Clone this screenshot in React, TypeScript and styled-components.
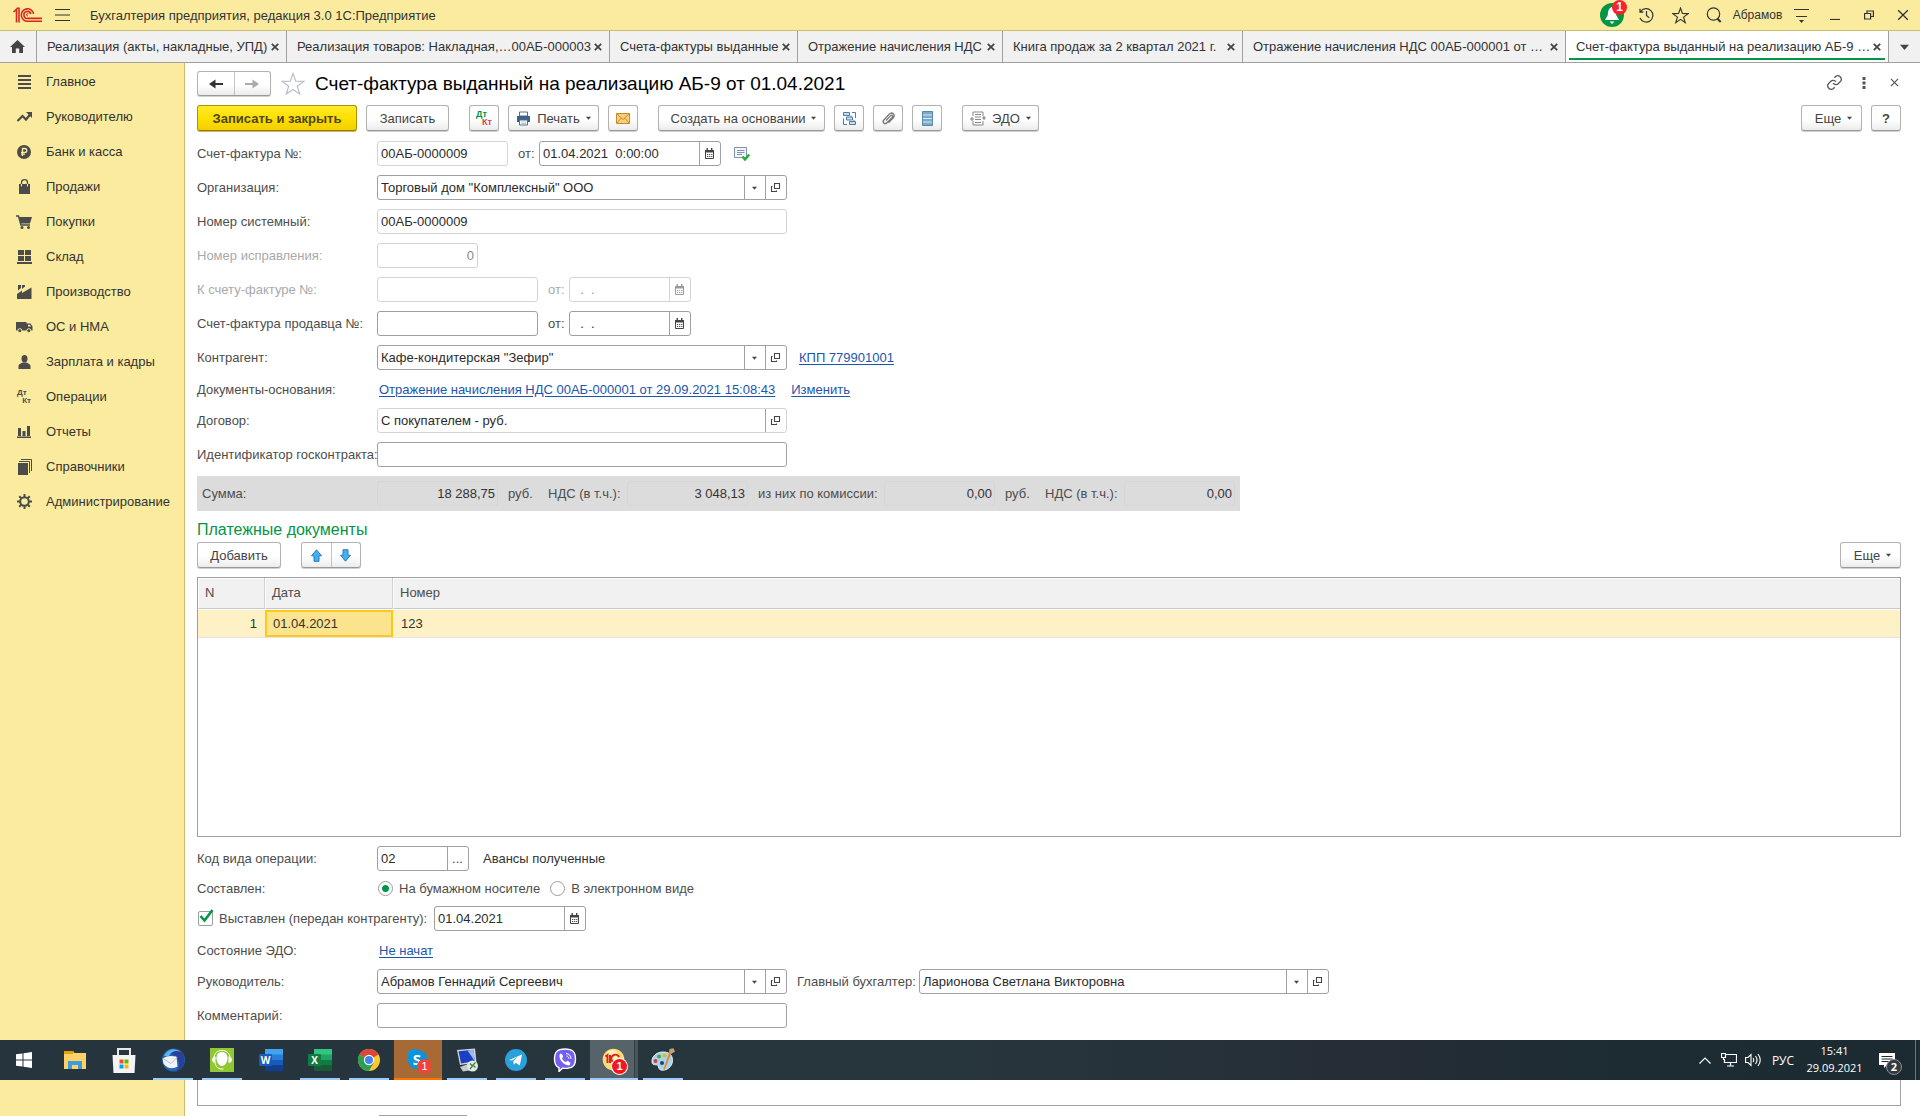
import React from "react";
import styled, { createGlobalStyle, css } from "styled-components";

const GlobalStyle = createGlobalStyle`
  * { box-sizing: border-box; }
  body { margin: 0; background: #fff; }
  body, button, input { font-family: "Liberation Sans", Arial, sans-serif; font-size: 13px; color: #333; }
  button { margin: 0; padding: 0; border: 0; background: none; cursor: pointer; }
  svg { display: block; flex: none; }
`;

const line = "#a0a0a0";
const softLine = "#d4d4d4";
const yellow = "#fbeb9e";
const green = "#009646";

/* ---------- page shell ---------- */

const Page = styled.div`
  min-height: 100vh;
  display: flex;
  flex-direction: column;
`;

const TitleBar = styled.header`
  display: flex;
  align-items: center;
  height: 31px;
  background: ${yellow};
  border-bottom: 1px solid #c9be6c;
`;

const BrandLogo = styled.div`
  width: 55px;
  padding-left: 12px;
`;

const AppName = styled.div`
  flex: 1;
  padding-left: 19px;
  white-space: nowrap;
`;

const BarButton = styled.button`
  position: relative;
  display: flex;
  align-items: center;
  justify-content: center;
  width: 34px;
  height: 30px;
`;

const MenuButton = styled.button`
  width: 16px;
  height: 30px;
  display: flex;
  align-items: center;
`;

const UserName = styled.button`
  width: 53px;
  font-size: 12px;
`;

const BellCount = styled.span`
  position: absolute;
  top: 0;
  right: 2px;
  width: 15px;
  height: 15px;
  border-radius: 50%;
  background: #f8222c;
  color: #fff;
  font-size: 12px;
  font-weight: bold;
  line-height: 15px;
  text-align: center;
`;

/* ---------- tabs ---------- */

const TabBar = styled.nav`
  display: flex;
  height: 32px;
  background: #f1f1f1;
  border-bottom: 1px solid ${line};
`;

const HomeTab = styled.button`
  flex: none;
  display: flex;
  align-items: center;
  justify-content: center;
  width: 37px;
  padding-right: 2px;
  border-right: 1px solid ${line};
`;

const Tab = styled.div<{ $basis: number; $active?: boolean }>`
  position: relative;
  flex: 1 1 ${(p) => p.$basis}px;
  min-width: 0;
  display: flex;
  align-items: center;
  padding: 0 6px 0 10px;
  border-right: 1px solid ${line};
  ${(p) =>
    p.$active &&
    css`
      background: #fff;
      &::after {
        content: "";
        position: absolute;
        left: 3px;
        right: 3px;
        bottom: 2px;
        height: 2px;
        background: ${green};
      }
    `}
`;

const TabTitle = styled.button`
  flex: 1;
  min-width: 0;
  overflow: hidden;
  text-overflow: ellipsis;
  white-space: nowrap;
  text-align: left;
  line-height: 20px;
`;

const TabClose = styled.button`
  display: flex;
  align-items: center;
  justify-content: center;
  width: 10px;
  height: 20px;
`;

const TabList = styled.button`
  flex: none;
  width: 31px;
  display: flex;
  align-items: center;
  justify-content: center;
`;

/* ---------- sidebar ---------- */

const Workspace = styled.div`
  display: flex;
`;

const Sidebar = styled.aside`
  flex: none;
  width: 185px;
  padding-top: 1px;
  background: ${yellow};
  border-right: 1px solid #c9be6c;
`;

const SideItem = styled.button`
  display: flex;
  align-items: center;
  width: 100%;
  height: 35px;
  padding-left: 15px;
  gap: 13px;
  text-align: left;
`;

const SideIcon = styled.span`
  display: flex;
  justify-content: center;
  width: 18px;
`;

const PairIcon = styled.span<{ $tinted?: boolean }>`
  display: flex;
  flex-direction: column;
  width: ${(p) => (p.$tinted ? 16 : 14)}px;
  font-size: ${(p) => (p.$tinted ? 9 : 8)}px;
  font-weight: bold;
  line-height: 8px;
  color: ${(p) => (p.$tinted ? green : "#4b4b4b")};
  text-align: left;
  & > span:last-child {
    text-align: right;
    color: ${(p) => (p.$tinted ? "#e53b34" : "#4b4b4b")};
  }
`;

/* ---------- document ---------- */

const Document = styled.main`
  flex: 1;
  min-width: 0;
  background: #fff;
`;

const DocHeader = styled.div`
  display: flex;
  align-items: center;
  height: 33px;
  padding: 8px 11px 0 12px;
`;

const DocTitle = styled.h1`
  flex: 1;
  margin: 0;
  font-size: 19px;
  font-weight: normal;
  line-height: 24px;
  color: #000;
  white-space: nowrap;
`;

const HeaderIcon = styled.button`
  display: flex;
  align-items: center;
  justify-content: center;
  width: 30px;
  height: 26px;
  padding-bottom: 2px;
`;

const FavButton = styled.button`
  display: flex;
  justify-content: center;
  width: 44px;
`;

const Form = styled.form`
  display: flex;
  flex-direction: column;
  gap: 9px;
  padding: 9px 19px 12px 12px;
`;

const buttonFace = css`
  border: 1px solid #b2b2b2;
  border-bottom-color: #999;
  border-radius: 3px;
  background: linear-gradient(#fff 55%, #ececec);
  box-shadow: 0 1px 0 #d0d0d0;
  color: #444;
`;

const Button = styled.button.attrs({ type: "button" })<{ $width: number; $primary?: boolean }>`
  display: flex;
  align-items: center;
  justify-content: center;
  gap: 6px;
  width: ${(p) => p.$width}px;
  height: 26px;
  white-space: nowrap;
  ${buttonFace}
  ${(p) =>
    p.$primary &&
    css`
      border-color: #ab9400;
      border-bottom-color: #8f7b00;
      background: linear-gradient(#ffea2e, #ffe000 50%, #f2cf00);
      box-shadow: 0 1px 0 #c9b95a;
      font-weight: bold;
      color: #4d4620;
    `}
`;

const SplitButtons = styled.div<{ $half: number; $tall?: boolean }>`
  display: flex;
  height: ${(p) => (p.$tall ? 26 : 25)}px;
  ${buttonFace}
  & > button {
    display: flex;
    align-items: center;
    justify-content: center;
    width: ${(p) => p.$half}px;
  }
  & > button + button {
    border-left: 1px solid #c4c4c4;
    padding-right: 2px;
  }
`;

const Toolbar = styled.div`
  display: flex;
  gap: 20px;
  padding-bottom: 1px;
`;

const TableToolbar = styled(Toolbar)`
  margin-top: -6px;
  padding-bottom: 0;
`;

const ButtonGroup = styled.div<{ $end?: boolean }>`
  display: flex;
  gap: 9px;
  margin-left: ${(p) => (p.$end ? "auto" : 0)};
`;

const MoreButton = styled(Button)`
  padding-left: 4px;
`;

const Row = styled.div<{ $height?: number }>`
  display: flex;
  align-items: center;
  height: ${(p) => p.$height ?? 25}px;
`;

const Label = styled.label<{ $width?: number; $dim?: boolean; $pad?: number }>`
  flex: none;
  width: ${(p) => p.$width ?? 180}px;
  padding-left: ${(p) => p.$pad ?? 0}px;
  color: ${(p) => (p.$dim ? "#a9a9a9" : "#4d4d4d")};
  white-space: nowrap;
`;

const FieldBox = styled.div<{ $width: number; $soft?: boolean; $dim?: boolean }>`
  flex: none;
  display: flex;
  width: ${(p) => p.$width}px;
  height: 25px;
  border: 1px solid ${(p) => (p.$soft || p.$dim ? softLine : line)};
  border-radius: 3px;
  background: #fff;
  & > input {
    flex: 1;
    min-width: 0;
    padding: 0 3px;
    border: 0;
    outline: 0;
    background: none;
    color: ${(p) => (p.$dim ? "#8a8a8a" : "#2b2b2b")};
  }
  & > button {
    display: flex;
    align-items: center;
    justify-content: center;
    width: 21px;
    padding-right: 1px;
    border-left: 1px solid ${(p) => (p.$dim ? softLine : line)};
    color: ${(p) => (p.$dim ? "#9a9a9a" : "#444")};
  }
`;

const NumberInput = styled.input`
  text-align: right;
`;

const Link = styled.a`
  color: #1c55ae;
  text-decoration: underline;
  text-underline-offset: 2px;
  white-space: nowrap;
`;

const Links = styled.div<{ $indent: number }>`
  display: flex;
  gap: 16px;
  padding-left: ${(p) => p.$indent}px;
`;

const IconAfter = styled.button.attrs({ type: "button" })`
  padding-left: 13px;
`;

const Note = styled.span`
  padding-left: 14px;
`;

const Totals = styled.div`
  display: flex;
  align-items: center;
  align-self: flex-start;
  height: 35px;
  padding-right: 5px;
  background: #dcdcdc;
`;

const TotalInput = styled.input.attrs({ readOnly: true })<{ $width: number }>`
  width: ${(p) => p.$width}px;
  height: 25px;
  padding: 0 2px;
  border: 1px solid #d6d6d6;
  border-radius: 3px;
  background: none;
  color: #333;
  text-align: right;
`;

const SectionTitle = styled.h2`
  margin: 0;
  font-size: 16px;
  font-weight: normal;
  line-height: 19px;
  color: ${green};
`;

const TableFrame = styled.div`
  height: 260px;
  border: 1px solid ${line};
`;

const Table = styled.table`
  width: 100%;
  table-layout: fixed;
  border-collapse: separate;
  border-spacing: 0;
  th {
    height: 31px;
    padding: 0 8px 2px 6px;
    border: 1px solid #fff;
    border-right-width: 0;
    border-bottom: 1px solid #c8c8c8;
    background: #f1f1f1;
    font-weight: normal;
    text-align: left;
    color: #4d4d4d;
    box-shadow: -1px 0 0 #d2d2d2;
  }
  th:first-child { box-shadow: none; }
  td {
    height: 29px;
    padding: 0 8px;
    border-top: 1px solid #fff;
    border-bottom: 1px solid #e4e4e4;
    background: #fdf1c5;
    color: #333;
  }
  td:first-child { text-align: right; }
`;

const ActiveCell = styled.td`
  box-shadow: inset 0 0 0 2px #fbc81f;
  background: #fce48e !important;
`;

const Radio = styled.label`
  display: flex;
  align-items: center;
  gap: 6px;
  margin-right: 9px;
  color: #4d4d4d;
  input {
    appearance: none;
    width: 15px;
    height: 15px;
    margin: 0 0 0 1px;
    border: 1px solid #9c9c9c;
    border-radius: 50%;
    background: #fff;
  }
  input:checked {
    background: radial-gradient(circle, ${green} 3px, #fff 4px);
  }
`;

const Check = styled.label`
  display: flex;
  align-items: center;
  gap: 6px;
  width: 237px;
  padding-left: 1px;
  color: #4d4d4d;
  white-space: nowrap;
`;

const CheckMark = styled.span`
  position: relative;
  width: 15px;
  height: 15px;
  input {
    display: block;
    appearance: none;
    width: 15px;
    height: 15px;
    margin: 0;
    border: 1px solid #9c9c9c;
    border-radius: 2px;
  }
  svg {
    position: absolute;
    left: 1px;
    top: -2px;
    pointer-events: none;
  }
`;

/* ---------- taskbar ---------- */

const Taskbar = styled.footer`
  display: flex;
  height: 40px;
  background: linear-gradient(90deg, #26343e 0%, #27363c 50%, #252d36 72%, #1d2c33 84%, #1c2a31 100%);
  font-family: "Open Sans", "Noto Sans", sans-serif;
`;

const TaskApps = styled.div`
  flex: 1;
  display: flex;
  gap: 1px;
`;

const TaskButton = styled.button<{ $run?: boolean; $state?: "alert" | "active" }>`
  position: relative;
  display: flex;
  align-items: center;
  justify-content: center;
  width: 48px;
  height: 40px;
  &:first-child { margin-right: 2px; }
  ${(p) => p.$state === "alert" && css`background: #a86a35;`}
  ${(p) => p.$state === "active" && css`background: linear-gradient(90deg, #566369 44px, #343f45 44px, #343f45 45px, #4a555b 45px);`}
  &::after {
    content: "";
    position: absolute;
    bottom: 0;
    left: ${(p) => (p.$state ? 0 : 4)}px;
    right: ${(p) => (p.$state ? 0 : 4)}px;
    height: ${(p) => (p.$run ? 2 : 0)}px;
    background: ${(p) => (p.$state === "alert" ? "#ff7300" : "#9fc9f8")};
  }
`;

const TaskBadge = styled.span<{ $ring?: boolean }>`
  position: absolute;
  left: ${(p) => (p.$ring ? 22 : 23)}px;
  top: 19px;
  width: 15px;
  height: 15px;
  border-radius: 50%;
  background: ${(p) => (p.$ring ? "#f3161e" : "#f0433a")};
  box-shadow: 0 0 0 ${(p) => (p.$ring ? 1 : 0)}px #fff;
  color: #fff;
  font-size: 11px;
  font-weight: ${(p) => (p.$ring ? "bold" : "normal")};
  line-height: 15px;
  text-align: center;
`;

const Tray = styled.div`
  display: flex;
  align-items: center;
`;

const TrayButton = styled.button`
  display: flex;
  justify-content: center;
  width: 24px;
`;

const TrayLang = styled.button`
  width: 36px;
  font: 12px "Open Sans", "Noto Sans", sans-serif;
  color: #fff;
`;

const TrayClock = styled.button`
  width: 67px;
  padding-bottom: 2px;
  font: 11px/17px "Open Sans", "Noto Sans", sans-serif;
  color: #fff;
  & > span { display: block; }
`;

const Notices = styled.button`
  position: relative;
  width: 48px;
  height: 40px;
  padding-left: 11px;
  border-right: 1px solid #6d777b;
  margin-right: 4px;
`;

const NoticeCount = styled.span`
  position: absolute;
  left: 18px;
  top: 19px;
  width: 16px;
  height: 16px;
  border: 1px solid #8b9193;
  border-radius: 50%;
  background: #333a3d;
  font: bold 11px/14px "Open Sans", sans-serif;
  color: #fff;
`;

/* ---------- area under the taskbar ---------- */

const Below = styled.div`
  flex: 1;
  display: flex;
`;

const BelowContent = styled.div`
  flex: 1;
  padding: 0 19px 0 12px;
`;

const BelowBox = styled.div`
  height: 26px;
  margin-bottom: 9px;
  border: 1px solid ${line};
  border-top: 0;
`;

const BelowField = styled.div`
  width: 88px;
  height: 1px;
  margin-left: 182px;
  background: ${line};
`;

/* ---------- icons ---------- */

const ink = "#4b4b4b";

const Svg = ({ w, h = w, vb, children }: { w: number; h?: number; vb?: string; children: React.ReactNode }) => (
  <svg width={w} height={h} viewBox={vb ?? `0 0 ${w} ${h}`} fill="none" aria-hidden="true">
    {children}
  </svg>
);

const Caret = ({ size = 5 }: { size?: number }) => (
  <Svg w={size} h={size > 5 ? 6 : 4} vb="0 0 6 4">
    <path d="M0 0.5h6L3 4z" fill="#444" />
  </Svg>
);

const Cross = ({ size, width, color = ink }: { size: number; width: number; color?: string }) => (
  <Svg w={size} vb="0 0 10 10">
    <path d="M1 1l8 8M9 1L1 9" stroke={color} strokeWidth={width} />
  </Svg>
);

const OneCLogo = () => (
  <Svg w={30} h={16}>
    <g stroke="#d9261c" strokeWidth="1.6">
      <path d="M1.5 5L4.5 2.3V15.5M4.5 1.2H7V15.5" />
      <path d="M21.6 6.8A6.2 6.2 0 1 0 16 14.2H30" />
      <path d="M18.8 7A3.5 3.5 0 1 0 16 11.4H30" />
      <path d="M16.8 7.3A1.2 1.2 0 1 0 16 8.9" strokeWidth="1" />
    </g>
  </Svg>
);

const Calendar = () => (
  <Svg w={11} h={12}>
    <path d="M1.5 2.5h8v8h-8z" stroke="currentColor" />
    <path d="M1 2h9v2.500H1zM2.500 0h1.400v2H2.500zM7 0h1.400v2H7z" fill="currentColor" />
    <path d="M3 6.500h5.500M3 8.500h5.500" stroke="currentColor" strokeDasharray="1.200 0.900" />
  </Svg>
);

const OpenIcon = () => (
  <Svg w={11}>
    <path d="M4.5 1.5h5v5h-5zM2.500 4.500H1.500v5h5V8.500" stroke="currentColor" strokeWidth="1.1" />
  </Svg>
);

const Arrow = ({ left, color }: { left?: boolean; color: string }) => (
  <Svg w={16} h={12}>
    <g transform={left ? undefined : "matrix(-1 0 0 1 16 0)"}>
      <path d="M15 5H7.500V1.500L1 6l6.500 4.500V7H15z" fill={color} />
    </g>
  </Svg>
);

const StarIcon = ({ size, color, width }: { size: number; color: string; width: number }) => (
  <Svg w={size} vb="0 0 24 24">
    <path d="M12 1.500l2.700 7.700 8.100.2-6.500 4.900 2.400 7.800-6.700-4.700-6.700 4.700 2.400-7.800L1.200 9.400l8.100-.2z" stroke={color} strokeWidth={width} />
  </Svg>
);

const BellIcon = () => (
  <Svg w={24}>
    <circle cx="12" cy="12" r="12" fill={green} />
    <path d="M12 4c3 1 4 3.500 4.200 8l2.800 5H5l2.800-5C8 7.500 9 5 12 4z" fill="#fff" />
    <path d="M9.500 18.500h5L12 21z" fill="#fff" />
  </Svg>
);

const HistoryIcon = () => (
  <Svg w={16}>
    <path d="M2.600 4.600A6.700 6.700 0 1 1 2 11M2 1.800v3.400h3.400M8.500 4v4.500l2.800 2.400" stroke="#333" strokeWidth="1.200" />
  </Svg>
);

const SearchIcon = () => (
  <Svg w={16}>
    <circle cx="7.500" cy="7" r="6.200" stroke="#333" strokeWidth="1.200" />
    <path d="M11.500 11.800l3.200 3.200" stroke="#333" strokeWidth="2" />
  </Svg>
);

const PrinterIcon = () => (
  <Svg w={15}>
    <path d="M3.500 1h8v4h-8z" fill="#fff" stroke="#50708c" />
    <path d="M1 5h13v6H1z" fill="#3d6486" />
    <path d="M3.500 9h8v5h-8z" fill="#fff" stroke="#50708c" />
    <path d="M5 11h5M5 12.500h5" stroke="#9db5c8" strokeWidth=".7" />
  </Svg>
);

const MailIcon = () => (
  <Svg w={14} h={11}>
    <path d="M.5.5h13v10H.5z" fill="#f8cf7c" stroke="#c98a2c" />
    <path d="M.8.8L7 6.500 13.200.8M.8 10.200L5.300 5M13.200 10.200L8.700 5" stroke="#c98a2c" />
  </Svg>
);

const StructureIcon = () => (
  <Svg w={15}>
    <path d="M1.500 1.500h6v3h-6zM4.500 6h6v3h-6zM7.500 10.500h6v3h-6z" fill="#c9dced" stroke="#4d7fa6" />
    <path d="M10 1.500h3.500V7M1.500 7.500v6H5M9 4.500V6M12 9v1.500" stroke="#4d7fa6" />
  </Svg>
);

const ClipIcon = () => (
  <Svg w={15}>
    <path d="M5 9.500l4.500-4.600c1.500-1.500 3 .1 1.700 1.500L6 11.700c-2.300 2.300-5.300-.6-3-3L8.200 3.300c3-3 6.800.4 4 3.500l-4.700 4.900" stroke="#777" strokeWidth="1.300" />
  </Svg>
);

const BookIcon = () => (
  <Svg w={11} h={15}>
    <path d="M.5.5h10v14H.5z" fill="#7ea9c8" stroke="#5588ac" />
    <path d="M1 4h9M1 7.500h9M1 11h9" stroke="#d9e8f2" />
  </Svg>
);

const EdoIcon = () => (
  <Svg w={16} h={15}>
    <path d="M3 5V1h10v4M3 10v4h10v-4" stroke="#888" />
    <path d="M5 3.500h6M5 6h6M5 8.500h6M5 11.500h6" stroke="#888" />
    <path d="M0 8h4M2 6v4M12 7h4M14 5v4" stroke="#888" strokeWidth="1.200" />
  </Svg>
);

const PostedIcon = () => (
  <Svg w={16} h={15}>
    <path d="M.5 1.500h12v10H.5z" fill="#f4f7fa" stroke="#7f93ac" />
    <path d="M3 4.500h7.500M3 6.500h7.500M3 8.500h5" stroke="#7f93ac" />
    <path d="M8.500 10.500l2.500 3 4.200-5" stroke="#22b13a" strokeWidth="2.400" />
  </Svg>
);

const BlueArrow = ({ down }: { down?: boolean }) => (
  <Svg w={13}>
    <g transform={down ? "rotate(180 6.5 6.5)" : undefined}>
      <path d="M6.500.8l5 6H9v5.500H4V6.800H1.500z" fill="#44aef0" stroke="#2380bd" />
    </g>
  </Svg>
);

const LinkIcon = () => (
  <Svg w={17} vb="0 0 24 24">
    <path d="M10 13a5 5 0 0 0 7.500.5l3-3a5 5 0 0 0-7-7l-1.700 1.700M14 11a5 5 0 0 0-7.500-.5l-3 3a5 5 0 0 0 7 7l1.700-1.700" stroke="#555" strokeWidth="1.800" />
  </Svg>
);

const sideIcons: Record<string, React.ReactNode> = {
  main: (
    <Svg w={13} h={14}>
      <path d="M0 1h13M0 5h13M0 9h13M0 13h13" stroke={ink} strokeWidth="2" />
    </Svg>
  ),
  chart: (
    <Svg w={17} h={12}>
      <path d="M1.500 10l5-5 3.500 3.500L14.500 3" stroke={ink} strokeWidth="2.200" />
      <path d="M10 1h6v6z" fill={ink} />
    </Svg>
  ),
  ruble: (
    <Svg w={14}>
      <circle cx="7" cy="7" r="7" fill={ink} />
      <path d="M5.500 11V3.500h2.300a1.900 1.900 0 0 1 0 3.900H4M4 9.200h4" stroke={yellow} strokeWidth="1.300" />
    </Svg>
  ),
  bag: (
    <Svg w={13} h={15}>
      <path d="M1 5h11v10H1z" fill={ink} />
      <path d="M3.500 7V3.500a3 2.800 0 0 1 6 0V7" stroke={ink} strokeWidth="1.300" />
      <path d="M3.500 5v2.500M9.500 5v2.500" stroke={yellow} />
    </Svg>
  ),
  cart: (
    <Svg w={16} h={14}>
      <path d="M0 1h2.500L5 10h9" stroke={ink} strokeWidth="1.500" />
      <path d="M3 2h13l-2 6.500H5z" fill={ink} />
      <circle cx="6" cy="12.500" r="1.500" fill={ink} />
      <circle cx="12.500" cy="12.500" r="1.500" fill={ink} />
    </Svg>
  ),
  stock: (
    <Svg w={15} h={14}>
      <path d="M1 0h6v5H1zM8 0h6v5H8zM1 6h6v5H1zM8 6h6v5H8zM0 12h15v2H0z" fill={ink} />
    </Svg>
  ),
  factory: (
    <Svg w={15} h={14}>
      <path d="M0 14V9l5-3.500V8l9.500-5.500V14zM1 0h3v3L1 5.500zM5 0h3v1.500L5 4z" fill={ink} />
    </Svg>
  ),
  truck: (
    <Svg w={17} h={12}>
      <path d="M0 1h10.500v8.500H0zM10.500 2.500h4L16.500 5.500v4h-6z" fill={ink} />
      <path d="M12 3.700h2l1 1.800h-3z" fill={yellow} />
      <circle cx="3.800" cy="9.700" r="2" fill={ink} stroke={yellow} />
      <circle cx="12.800" cy="9.700" r="2" fill={ink} stroke={yellow} />
    </Svg>
  ),
  person: (
    <Svg w={13} h={14}>
      <ellipse cx="6.500" cy="3.700" rx="3" ry="3.700" fill={ink} />
      <path d="M.5 14v-3c0-2 3-2.700 4-3.500h4c1 .8 4 1.500 4 3.500v3z" fill={ink} />
    </Svg>
  ),
  ops: (
    <PairIcon>
      <span>Дт</span>
      <span>Кт</span>
    </PairIcon>
  ),
  bars: (
    <Svg w={14} h={12}>
      <path d="M1 2h3v8H1zM5.500 5h3v5h-3zM10 0h3v10h-3zM0 10.500h14V12H0z" fill={ink} />
    </Svg>
  ),
  books: (
    <Svg w={15} h={16}>
      <path d="M1 4h10v12H1z" fill={ink} />
      <path d="M2 2.500h10.500V14M4 .5h10.500V12" stroke={ink} />
    </Svg>
  ),
  gear: (
    <Svg w={15}>
      <circle cx="7.500" cy="7.500" r="4.300" stroke={ink} strokeWidth="2" />
      <path d="M7.500 0v3M7.500 12v3M0 7.500h3M12 7.500h3M2.200 2.200l2.100 2.100M10.700 10.700l2.100 2.100M2.200 12.800l2.100-2.100M10.700 4.300l2.100-2.100" stroke={ink} strokeWidth="2" />
    </Svg>
  ),
};

/* taskbar drawings */

const OfficeIcon = ({ letter, tones }: { letter: string; tones: string[] }) => (
  <Svg w={24} h={22}>
    <path d="M6 0h18v6H6z" fill={tones[0]} />
    <path d="M6 5.500h18V11H6z" fill={tones[1]} />
    <path d="M6 11h18v5.500H6z" fill={tones[2]} />
    <path d="M6 16.500h18V22H6z" fill={tones[3]} />
    <rect y="5" width="13" height="12" rx="1" fill={tones[4]} />
    <text x="6.500" y="14.800" textAnchor="middle" fontFamily="Open Sans" fontWeight="bold" fontSize="10" fill="#fff">
      {letter}
    </text>
  </Svg>
);

const taskIcons: Record<string, React.ReactNode> = {
  win: (
    <Svg w={16}>
      <path d="M0 2.300l6.500-.9v6.100H0zM7.500 1.200L16 0v7.500H7.500zM0 8.500h6.500v6.100L0 13.700zM7.500 8.500H16V16l-8.500-1.200z" fill="#fff" />
    </Svg>
  ),
  files: (
    <Svg w={22} h={18}>
      <path d="M0 0h9l1.500 2H22v16H0z" fill="#fdd367" />
      <path d="M0 0h9l1 1.500L8.500 3H0z" fill="#e8a208" />
      <path d="M4 18v-8h14v8h-4v-4H8v4z" fill="#3d9be0" />
    </Svg>
  ),
  store: (
    <Svg w={24} h={25}>
      <path d="M6 8V1h12v7" stroke="#e8e8e8" strokeWidth="2" />
      <path d="M.5 7h23l-1 18h-21z" fill="#f4f4f4" />
      <path d="M7.500 11.500h4v4h-4z" fill="#f25022" />
      <path d="M12.500 11.500h4v4h-4z" fill="#6bb700" />
      <path d="M7.500 16.500h4v4h-4z" fill="#00a4ef" />
      <path d="M12.500 16.500h4v4h-4z" fill="#ffb900" />
    </Svg>
  ),
  mail: (
    <Svg w={24}>
      <circle cx="12.500" cy="12" r="11.500" fill="#1f66b5" />
      <path d="M14 1c6 1 10 6 9.500 12s-5 10-9 10.500c5-4 6-12-4-18z" fill="#2c3f96" />
      <path d="M3 8C6 1 14-1 20 4c-5-2-10-1-12 4z" fill="#5fb4ec" />
      <path d="M1.500 10.500c4-3 9-3 14-2l1 10c-5 3-11 2-14-3z" fill="#f2f3f5" />
      <path d="M2 10.500l8 5 6-6" stroke="#b9bfc6" />
    </Svg>
  ),
  headset: (
    <Svg w={24}>
      <path d="M0 0h24v24H0z" fill="#8fc832" />
      <path d="M4 9.500C4.500 0 19.500 0 20 9.500" stroke="#fff" />
      <path d="M12 4c3.500 0 5.500 2.300 5.500 6S15 18 12 18s-5.500-4.300-5.500-8S8.500 4 12 4z" fill="#fff" />
      <path d="M5.500 8.500C1 8.500 1 15 5.500 15zM18.500 8.500c4.500 0 4.500 6.500 0 6.500z" fill="#fff" />
      <path d="M5 15c1 4 3 5.500 6 6h2.500" stroke="#fff" />
    </Svg>
  ),
  word: <OfficeIcon letter="W" tones={["#41a5ee", "#2b7cd3", "#185abd", "#103f91", "#185abd"]} />,
  excel: <OfficeIcon letter="X" tones={["#33c481", "#21a366", "#107c41", "#185c37", "#107c41"]} />,
  chrome: (
    <Svg w={22} vb="0 0 24 24">
      <circle cx="12" cy="12" r="12" fill="#fcc934" />
      <path d="M12 12L1.600 6A12 12 0 0 1 22.400 6z" fill="#d9473a" />
      <path d="M12 12L1.600 6A12 12 0 0 0 12 24l5.200-9z" fill="#2f9e52" />
      <circle cx="12" cy="12" r="5.600" fill="#fff" />
      <circle cx="12" cy="12" r="4.400" fill="#4285f4" />
    </Svg>
  ),
  skype: (
    <Svg w={24}>
      <circle cx="8" cy="8" r="7" fill="#0f9ae0" />
      <circle cx="15" cy="15" r="7" fill="#0078d4" />
      <circle cx="11.500" cy="11.500" r="9.800" fill="#0a94dd" />
      <text x="11" y="17" textAnchor="middle" fontFamily="Open Sans" fontWeight="bold" fontSize="15" fill="#fff">S</text>
    </Svg>
  ),
  remote: (
    <Svg w={24}>
      <path d="M2 2l18-1.500 1.500 14L5 17z" fill="#d8d8d8" />
      <path d="M3.500 3.300l15-1.500 1.300 11.500L6 15.500z" fill="#1b3fc4" />
      <path d="M12.500 2.500l6-.7 1.300 11.500z" fill="#9db8f2" />
      <path d="M5 19l8-3 4 6-9 1.500z" fill="#c9c9c9" />
      <circle cx="17.500" cy="18" r="5.500" fill="#e4e8e4" />
      <path d="M15 15.500l2.500 2.500-2.500 3M20.500 14.500L18 17l2.500 2.500" stroke="#3a8b45" strokeWidth="1.400" />
    </Svg>
  ),
  telegram: (
    <Svg w={22}>
      <circle cx="11" cy="11" r="11" fill="#2aa1da" />
      <path d="M4 11l13-5.500-2.200 11-4-2.800-2 2-.5-3.600 5-4.600-6.500 4z" fill="#fff" />
    </Svg>
  ),
  viber: (
    <Svg w={24}>
      <path d="M12 1C4 1 1.500 4 1.500 11c0 5 1.500 7.500 4.500 8.700V23.500l3.500-3.200c10 .5 13-2.300 13-9.300S20 1 12 1z" fill="#7360f2" stroke="#fff" strokeWidth="1.400" />
      <path d="M7.500 5.500c-3 2 .5 11 8 12 2-.5 2.500-2.500 1-3.500l-2-1.200-1.400 1.200c-2-.5-3.500-2-4-4L10.200 8.500 9 6z" fill="#fff" />
      <path d="M13 5.500c3 .3 5 2.300 5 5.500M13.500 8c1.500.2 2.300 1.200 2.400 2.700" stroke="#fff" />
    </Svg>
  ),
  onec: (
    <Svg w={24}>
      <circle cx="11.500" cy="11.500" r="10.800" fill="#fbdc78" />
      <circle cx="10" cy="8" r="6" fill="#fff3b5" />
      <path d="M3.500 8.500L5.500 7V15M8 7v8" stroke="#d9261c" strokeWidth="2" />
      <path d="M17 9a4 4 0 1 0-2.500 5.500H20" stroke="#d9261c" strokeWidth="2" />
    </Svg>
  ),
  paint: (
    <Svg w={24}>
      <path d="M12 4C6 4 .5 8 1 14c.3 3.500 3 2.500 5 2.800 2 .5.500 4 4 5.200 5 1.200 11.500-3 11.500-9.500S17 4 12 4z" fill="#a9d3ec" stroke="#e6f2f9" />
      <circle cx="4.500" cy="13" r="2" fill="#dd3a36" />
      <circle cx="8" cy="8.500" r="2" fill="#44ad3a" />
      <circle cx="13.500" cy="7.500" r="2" fill="#e8b923" />
      <circle cx="11" cy="15" r="2" fill="#24435e" />
      <path d="M21.500 2.500L14 21l-1.500 2 .2-2.800L19 2z" fill="#e08b2c" />
      <path d="M18.500 1l4-.8L24 3.500l-3.500 2.200-2.300-1.200z" fill="#c6a077" />
    </Svg>
  ),
};

/* ---------- field building blocks ---------- */

type FieldProps = {
  id: string;
  width?: number;
  value?: string;
  soft?: boolean;
  dim?: boolean;
  numeric?: boolean;
  tools?: Array<"list" | "open" | "date" | "pick">;
};

const toolFace = {
  list: ["Выбрать из списка", <Caret key="c" />],
  open: ["Открыть", <OpenIcon key="o" />],
  date: ["Календарь", <Calendar key="d" />],
  pick: ["Выбрать", "..."],
} as const;

const Field = ({ id, width = 410, value = "", soft, dim, numeric, tools = [] }: FieldProps) => {
  const Input = numeric ? NumberInput : "input";
  return (
    <FieldBox $width={width} $soft={soft} $dim={dim}>
      <Input id={id} type="text" defaultValue={value} readOnly={soft} disabled={dim} />
      {tools.map((t) => (
        <button key={t} type="button" aria-label={toolFace[t][0]} disabled={dim}>
          {toolFace[t][1]}
        </button>
      ))}
    </FieldBox>
  );
};

/* ---------- data ---------- */

const tabs = [
  { title: "Реализация (акты, накладные, УПД)", basis: 250 },
  { title: "Реализация товаров: Накладная,…00АБ-000003", basis: 323 },
  { title: "Счета-фактуры выданные", basis: 188 },
  { title: "Отражение начисления НДС", basis: 205 },
  { title: "Книга продаж за 2 квартал 2021 г.", basis: 240 },
  { title: "Отражение начисления НДС 00АБ-000001 от …", basis: 323 },
  { title: "Счет-фактура выданный на реализацию АБ-9 …", basis: 323, active: true },
];

const sections: Array<[string, string]> = [
  ["main", "Главное"],
  ["chart", "Руководителю"],
  ["ruble", "Банк и касса"],
  ["bag", "Продажи"],
  ["cart", "Покупки"],
  ["stock", "Склад"],
  ["factory", "Производство"],
  ["truck", "ОС и НМА"],
  ["person", "Зарплата и кадры"],
  ["ops", "Операции"],
  ["bars", "Отчеты"],
  ["books", "Справочники"],
  ["gear", "Администрирование"],
];

const apps: Array<{ icon: string; name: string; run?: boolean; state?: "alert" | "active"; count?: string }> = [
  { icon: "win", name: "Пуск" },
  { icon: "files", name: "Проводник" },
  { icon: "store", name: "Магазин" },
  { icon: "mail", name: "Почта", run: true },
  { icon: "headset", name: "Поддержка", run: true },
  { icon: "word", name: "Word" },
  { icon: "excel", name: "Excel", run: true },
  { icon: "chrome", name: "Chrome", run: true },
  { icon: "skype", name: "Skype", run: true, state: "alert", count: "1" },
  { icon: "remote", name: "Удаленный рабочий стол", run: true },
  { icon: "telegram", name: "Telegram", run: true },
  { icon: "viber", name: "Viber", run: true },
  { icon: "onec", name: "1С:Предприятие", run: true, state: "active", count: "1" },
  { icon: "paint", name: "Paint", run: true },
];

/* ---------- screen ---------- */

export default function App() {
  return (
    <Page>
      <GlobalStyle />
      <TitleBar>
        <BrandLogo>
          <OneCLogo />
        </BrandLogo>
        <MenuButton aria-label="Меню">
          <Svg w={15} h={12}>
            <path d="M0 .5h15M0 6h15M0 11.500h15" stroke="#333" strokeWidth="1.200" />
          </Svg>
        </MenuButton>
        <AppName>Бухгалтерия предприятия, редакция 3.0 1С:Предприятие</AppName>
        <BarButton aria-label="Уведомления">
          <BellIcon />
          <BellCount>1</BellCount>
        </BarButton>
        <BarButton aria-label="История">
          <HistoryIcon />
        </BarButton>
        <BarButton aria-label="Избранное">
          <StarIcon size={17} color="#333" width={1.6} />
        </BarButton>
        <BarButton aria-label="Поиск">
          <SearchIcon />
        </BarButton>
        <UserName>Абрамов</UserName>
        <BarButton aria-label="Настройки">
          <Svg w={15} h={15}>
            <path d="M0 1.500h15M2 8.500h11" stroke="#333" strokeWidth="1.200" />
            <path d="M5 12h5l-2.500 3z" fill="#333" />
          </Svg>
        </BarButton>
        <BarButton aria-label="Свернуть">
          <Svg w={10} h={10}>
            <path d="M0 9.500h10" stroke="#333" strokeWidth="1.200" />
          </Svg>
        </BarButton>
        <BarButton aria-label="Восстановить">
          <Svg w={10} h={10}>
            <path d="M.6 3.500h6v5.500h-6zM3 3.500V1h6.400v5.500H6.600" stroke="#333" strokeWidth="1.200" />
          </Svg>
        </BarButton>
        <BarButton aria-label="Закрыть">
          <Cross size={12} width={1.1} color="#333" />
        </BarButton>
      </TitleBar>

      <TabBar>
        <HomeTab aria-label="Начальная страница">
          <Svg w={15} h={13}>
            <path d="M7.500 0L15 7h-2v6H9.200V8.500H5.800V13H2V7H0z" fill="#444" />
          </Svg>
        </HomeTab>
        {tabs.map((t) => (
          <Tab key={t.title} $basis={t.basis} $active={t.active}>
            <TabTitle>{t.title}</TabTitle>
            <TabClose aria-label="Закрыть вкладку">
              <Cross size={8} width={2.2} color="#444" />
            </TabClose>
          </Tab>
        ))}
        <TabList aria-label="Все вкладки">
          <Caret size={9} />
        </TabList>
      </TabBar>

      <Workspace>
        <Sidebar>
          {sections.map(([icon, text]) => (
            <SideItem key={icon}>
              <SideIcon>{sideIcons[icon]}</SideIcon>
              {text}
            </SideItem>
          ))}
        </Sidebar>

        <Document>
          <DocHeader>
            <SplitButtons $half={36}>
              <button aria-label="Назад">
                <Arrow left color="#333" />
              </button>
              <button aria-label="Вперед">
                <Arrow color="#aaa" />
              </button>
            </SplitButtons>
            <FavButton aria-label="В избранное">
              <StarIcon size={24} color="#b9bfc6" width={1.2} />
            </FavButton>
            <DocTitle>Счет-фактура выданный на реализацию АБ-9 от 01.04.2021</DocTitle>
            <HeaderIcon aria-label="Ссылка">
              <LinkIcon />
            </HeaderIcon>
            <HeaderIcon aria-label="Дополнительно">
              <Svg w={4} h={12}>
                <path d="M.5 0h3v3h-3zM.5 4.500h3v3h-3zM.5 9h3v3h-3z" fill="#555" />
              </Svg>
            </HeaderIcon>
            <HeaderIcon aria-label="Закрыть">
              <Cross size={9} width={1.3} color="#555" />
            </HeaderIcon>
          </DocHeader>

          <Form>
            <Toolbar>
              <ButtonGroup>
                <Button $width={160} $primary>Записать и закрыть</Button>
                <Button $width={83}>Записать</Button>
              </ButtonGroup>
              <ButtonGroup>
                <Button $width={30}>
                  <PairIcon $tinted>
                    <span>Дт</span>
                    <span>Кт</span>
                  </PairIcon>
                </Button>
                <Button $width={91}>
                  <PrinterIcon />
                  Печать
                  <Caret />
                </Button>
                <Button $width={30} aria-label="Отправить по почте">
                  <MailIcon />
                </Button>
              </ButtonGroup>
              <ButtonGroup>
                <MoreButton $width={167}>
                  Создать на основании
                  <Caret />
                </MoreButton>
                <Button $width={30} aria-label="Структура подчиненности">
                  <StructureIcon />
                </Button>
                <Button $width={30} aria-label="Присоединенные файлы">
                  <ClipIcon />
                </Button>
                <Button $width={30} aria-label="Журнал">
                  <BookIcon />
                </Button>
              </ButtonGroup>
              <ButtonGroup>
                <Button $width={77}>
                  <EdoIcon />
                  ЭДО
                  <Caret />
                </Button>
              </ButtonGroup>
              <ButtonGroup $end>
                <MoreButton $width={61}>
                  Еще
                  <Caret />
                </MoreButton>
                <Button $width={30}>
                  <b>?</b>
                </Button>
              </ButtonGroup>
            </Toolbar>

            <Row>
              <Label htmlFor="number">Счет-фактура №:</Label>
              <Field id="number" width={131} value="00АБ-0000009" soft />
              <Label htmlFor="date" $width={31} $pad={10}>от:</Label>
              <Field id="date" width={182} value="01.04.2021  0:00:00" tools={["date"]} />
              <IconAfter aria-label="Проведен">
                <PostedIcon />
              </IconAfter>
            </Row>
            <Row>
              <Label htmlFor="org">Организация:</Label>
              <Field id="org" value={'Торговый дом "Комплексный" ООО'} tools={["list", "open"]} />
            </Row>
            <Row>
              <Label htmlFor="sysnum">Номер системный:</Label>
              <Field id="sysnum" value="00АБ-0000009" soft />
            </Row>
            <Row>
              <Label htmlFor="fixnum" $dim>Номер исправления:</Label>
              <Field id="fixnum" width={101} value="0" numeric dim />
            </Row>
            <Row>
              <Label htmlFor="toinvoice" $dim>К счету-фактуре №:</Label>
              <Field id="toinvoice" width={161} dim />
              <Label htmlFor="todate" $width={31} $pad={10} $dim>от:</Label>
              <Field id="todate" width={122} value="  .  ." dim tools={["date"]} />
            </Row>
            <Row>
              <Label htmlFor="seller">Счет-фактура продавца №:</Label>
              <Field id="seller" width={161} />
              <Label htmlFor="sellerdate" $width={31} $pad={10}>от:</Label>
              <Field id="sellerdate" width={122} value="  .  ." tools={["date"]} />
            </Row>
            <Row>
              <Label htmlFor="partner">Контрагент:</Label>
              <Field id="partner" value={'Кафе-кондитерская "Зефир"'} tools={["list", "open"]} />
              <Links $indent={12}>
                <Link href="#kpp">КПП 779901001</Link>
              </Links>
            </Row>
            <Row $height={20}>
              <Label as="span">Документы-основания:</Label>
              <Links $indent={2}>
                <Link href="#base">Отражение начисления НДС 00АБ-000001 от 29.09.2021 15:08:43</Link>
                <Link href="#edit">Изменить</Link>
              </Links>
            </Row>
            <Row>
              <Label htmlFor="contract">Договор:</Label>
              <Field id="contract" value="С покупателем - руб." soft tools={["open"]} />
            </Row>
            <Row>
              <Label htmlFor="gov">Идентификатор госконтракта:</Label>
              <Field id="gov" />
            </Row>

            <Totals>
              <Label htmlFor="sum" $pad={5}>Сумма:</Label>
              <TotalInput id="sum" $width={121} defaultValue="18 288,75" />
              <Label as="span" $width={50} $pad={10}>руб.</Label>
              <Label htmlFor="vat" $width={79}>НДС (в т.ч.):</Label>
              <TotalInput id="vat" $width={121} defaultValue="3 048,13" />
              <Label htmlFor="fee" $width={136} $pad={10}>из них по комиссии:</Label>
              <TotalInput id="fee" $width={111} defaultValue="0,00" />
              <Label as="span" $width={50} $pad={10}>руб.</Label>
              <Label htmlFor="feevat" $width={79}>НДС (в т.ч.):</Label>
              <TotalInput id="feevat" $width={111} defaultValue="0,00" />
            </Totals>

            <SectionTitle>Платежные документы</SectionTitle>
            <TableToolbar>
              <Button $width={84}>Добавить</Button>
              <SplitButtons $half={29} $tall>
                <button type="button" aria-label="Вверх">
                  <BlueArrow />
                </button>
                <button type="button" aria-label="Вниз">
                  <BlueArrow down />
                </button>
              </SplitButtons>
              <ButtonGroup $end>
                <MoreButton $width={61}>
                  Еще
                  <Caret />
                </MoreButton>
              </ButtonGroup>
            </TableToolbar>
            <TableFrame>
              <Table>
                <colgroup>
                  <col width={67} />
                  <col width={128} />
                  <col />
                </colgroup>
                <thead>
                  <tr>
                    <th>N</th>
                    <th>Дата</th>
                    <th>Номер</th>
                  </tr>
                </thead>
                <tbody>
                  <tr>
                    <td>1</td>
                    <ActiveCell>01.04.2021</ActiveCell>
                    <td>123</td>
                  </tr>
                </tbody>
              </Table>
            </TableFrame>

            <Row>
              <Label htmlFor="opcode">Код вида операции:</Label>
              <Field id="opcode" width={92} value="02" tools={["pick"]} />
              <Note>Авансы полученные</Note>
            </Row>
            <Row $height={17}>
              <Label as="span">Составлен:</Label>
              <Radio>
                <input type="radio" name="medium" defaultChecked />
                На бумажном носителе
              </Radio>
              <Radio>
                <input type="radio" name="medium" />
                В электронном виде
              </Radio>
            </Row>
            <Row>
              <Check>
                <CheckMark>
                  <input type="checkbox" defaultChecked />
                  <Svg w={15} h={14}>
                    <path d="M1.500 7l4 4.500L13.500 1" stroke={green} strokeWidth="2.600" />
                  </Svg>
                </CheckMark>
                Выставлен (передан контрагенту):
              </Check>
              <Field id="issued" width={152} value="01.04.2021" tools={["date"]} />
            </Row>
            <Row $height={20}>
              <Label as="span">Состояние ЭДО:</Label>
              <Links $indent={2}>
                <Link href="#edo">Не начат</Link>
              </Links>
            </Row>
            <Row>
              <Label htmlFor="head">Руководитель:</Label>
              <Field id="head" value="Абрамов Геннадий Сергеевич" tools={["list", "open"]} />
              <Label htmlFor="accountant" $width={132} $pad={10}>Главный бухгалтер:</Label>
              <Field id="accountant" value="Ларионова Светлана Викторовна" tools={["list", "open"]} />
            </Row>
            <Row>
              <Label htmlFor="comment">Комментарий:</Label>
              <Field id="comment" />
            </Row>
          </Form>
        </Document>
      </Workspace>

      <Taskbar>
        <TaskApps>
          {apps.map((a) => (
            <TaskButton key={a.icon} aria-label={a.name} $run={a.run} $state={a.state}>
              {taskIcons[a.icon]}
              {a.count && <TaskBadge $ring={a.state === "active"}>{a.count}</TaskBadge>}
            </TaskButton>
          ))}
        </TaskApps>
        <Tray>
          <TrayButton aria-label="Скрытые значки">
            <Svg w={12} h={7}>
              <path d="M.5 6.500L6 1l5.500 5.500" stroke="#fff" strokeWidth="1.200" />
            </Svg>
          </TrayButton>
          <TrayButton aria-label="Сеть">
            <Svg w={16} h={14}>
              <path d="M5 1.500h10.500v8h-12V6M9.500 9.500V13M6 13h7M.5.500h4v4h-4zM2.500 4.500V7" stroke="#fff" strokeWidth="1.200" />
            </Svg>
          </TrayButton>
          <TrayButton aria-label="Громкость">
            <Svg w={16} h={14}>
              <path d="M.6 4.500h2.400L6 1.500v11L3 9.500H.6zM8 5q1.500 2 0 4M10.500 3q3 4 0 8M13 1q4.500 6 0 12" stroke="#fff" strokeWidth="1.100" />
            </Svg>
          </TrayButton>
          <TrayLang>РУС</TrayLang>
          <TrayClock>
            <span>15:41</span>
            <span>29.09.2021</span>
          </TrayClock>
          <Notices aria-label="Уведомления системы">
            <Svg w={16} h={15}>
              <path d="M0 0h16v12H8l-3 3v-3H0z" fill="#fff" />
              <path d="M2.500 3.500h11M2.500 6h11M2.500 8.500h7" stroke="#1c2a31" />
            </Svg>
            <NoticeCount>2</NoticeCount>
          </Notices>
        </Tray>
      </Taskbar>

      <Below>
        <Sidebar />
        <BelowContent>
          <BelowBox />
          <BelowField />
        </BelowContent>
      </Below>
    </Page>
  );
}
